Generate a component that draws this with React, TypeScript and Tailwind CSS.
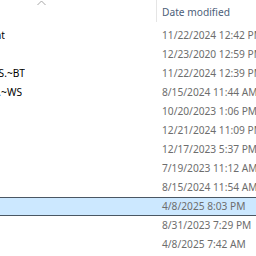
import React from 'react';

type Row = { name?: string; nameWidth?: number; date: string; selected?: boolean };

const rows: Row[] = [
  { name: '$GetCurrent', nameWidth: 5, date: '11/22/2024 12:42 PM' },
  { date: '12/23/2020 12:59 PM' },
  { name: '$WINDOWS.~BT', nameWidth: 25, date: '11/22/2024 12:39 PM' },
  { name: '$Windows.~WS', nameWidth: 22, date: '8/15/2024 11:44 AM' },
  { date: '10/20/2023 1:06 PM' },
  { date: '12/21/2024 11:09 PM' },
  { date: '12/17/2023 5:37 PM' },
  { date: '7/19/2023 11:12 AM' },
  { date: '8/15/2024 11:54 AM' },
  { date: '4/8/2025 8:03 PM', selected: true },
  { date: '8/31/2023 7:29 PM' },
  { date: '4/8/2025 7:42 AM' },
];

export default function App() {
  return (
    <div className="w-[256px] h-[256px] overflow-hidden bg-white text-[10.2px] font-['Segoe_UI','Noto_Sans',sans-serif]">
      {/* Column headers */}
      <div className="flex h-[26px]">
        <div className="w-[156px] shrink-0 relative">
          <svg className="absolute left-[37px] top-0" width="9" height="6" viewBox="0 0 9 6">
            <path d="M0.5 5 L4.5 1 L8.5 5" fill="none" stroke="#a7a7a7" strokeWidth="1" />
          </svg>
        </div>
        <div className="w-px h-[22px] shrink-0 bg-[#e5e5e5]" />
        <div className="pl-[5px] pt-[3px] leading-[18px] text-[#4c607a] whitespace-nowrap">Date modified</div>
      </div>

      {/* File rows */}
      <div className="flex flex-col">
        {rows.map((r, i) => (
          <div
            key={i}
            className={
              r.selected
                ? 'flex h-[19px] items-center bg-[#cce8ff] border-y border-[#4a5763]'
                : 'flex h-[19px] items-center'
            }
          >
            <div className="w-[157px] shrink-0 h-full flex items-center">
              {r.name && (
                <div className="h-full flex items-center justify-end overflow-hidden" style={{ width: r.nameWidth }}>
                  <span className="whitespace-nowrap text-black">{r.name}</span>
                </div>
              )}
            </div>
            <div className="pl-[5px] shrink-0 whitespace-nowrap text-[#6d6d6d]">{r.date}</div>
          </div>
        ))}
      </div>
    </div>
  );
}
